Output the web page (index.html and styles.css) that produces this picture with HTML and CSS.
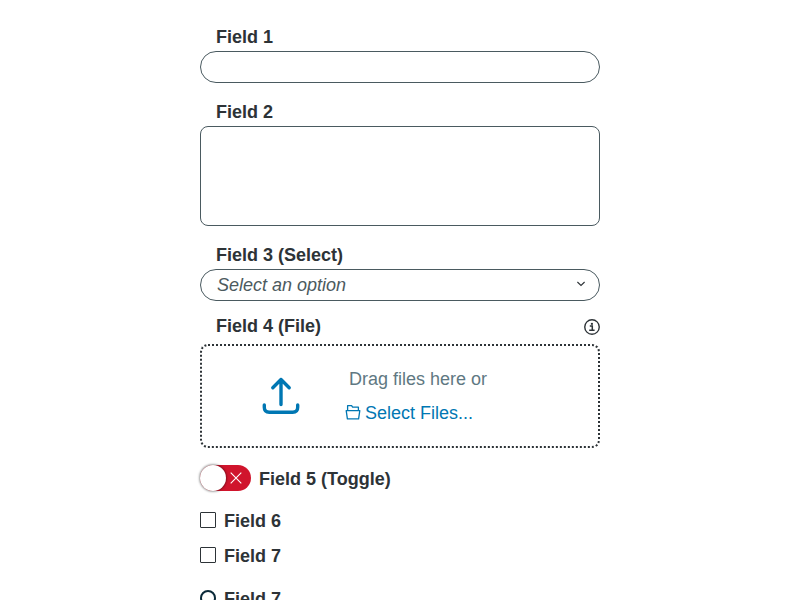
FILE: index.html
```
<!DOCTYPE html>
<html lang="en">
<head>
<meta charset="utf-8">
<title>Form</title>
<link rel="stylesheet" href="styles.css">
</head>
<body>
<form class="form">
  <div class="field">
    <label class="label" for="f1">Field 1</label>
    <input class="input" id="f1" type="text">
  </div>
  <div class="field field-area">
    <label class="label" for="f2">Field 2</label>
    <textarea class="textarea" id="f2"></textarea>
  </div>
  <div class="field field-select">
    <span class="label">Field 3 (Select)</span>
    <div class="select">
      <span>Select an option</span>
      <svg class="chevron" width="10" height="6" viewBox="0 0 10 6"><path d="M1.400 1 5 4.500 8.600 1" fill="none" stroke="#2d3337" stroke-width="1.100"/></svg>
    </div>
  </div>
  <div class="field-file">
    <div class="file-head">
      <span class="label">Field 4 (File)</span>
      <svg class="info" width="16" height="16" viewBox="0 0 16 16"><circle cx="8" cy="8" r="7.25" fill="none" stroke="#2d3337" stroke-width="1.4"/><path d="M5.8 7h2.500v4M5.200 11.200h5.400" fill="none" stroke="#2d3337" stroke-width="1.500"/><rect x="6.900" y="3.900" width="2" height="1.900" fill="#2d3337"/></svg>
    </div>
    <div class="drop">
      <svg class="upload" width="38" height="38" viewBox="0 0 38 38" fill="none" stroke="#0077b3" stroke-width="3.4" stroke-linecap="round" stroke-linejoin="round"><path d="M19 27.500V2.500M10.800 10.800 19 2.500l8.200 8.300M2.300 28v2.200q0 5 5 5h23.400q5 0 5-5V28"/></svg>
      <div class="drop-text">
        <span class="hint">Drag files here or</span>
        <span class="pick">
          <svg class="folder" width="16" height="16" viewBox="0 0 16 16" fill="none" stroke="#0077b3" stroke-width="1.3" stroke-linejoin="round"><path d="M1.200 6.600h13.600l-1.200 8.200H2.400zM2.600 6.400V1.700h4l1 1.500h5.800v3.200"/></svg>Select Files...</span>
      </div>
    </div>
  </div>
  <div class="row row-toggle">
    <span class="toggle"><span class="knob"></span><svg width="12" height="12" viewBox="0 0 12 12"><path d="M.7 .7l10.600 10.600M11.300 .7.7 11.300" fill="none" stroke="#fff" stroke-width="1.1"/></svg></span>
    <span>Field 5 (Toggle)</span>
  </div>
  <div class="row"><span class="check"></span><span>Field 6</span></div>
  <div class="row row-second"><span class="check"></span><span>Field 7</span></div>
  <div class="row row-radio"><span class="radio"></span><span>Field 7</span></div>
</form>
</body>
</html>
```
FILE: styles.css
```
* { box-sizing: border-box; }
html { overflow: hidden; }
body {
  margin: 0;
  height: 600px;
  overflow: hidden;
  background: #fff;
  color: #2d3337;
  font: bold 18px/20px "Liberation Sans", Arial, sans-serif;
}
svg { display: block; flex: none; }
.form { width: 400px; margin: 0 auto; padding-top: 27px; }
.field { display: flex; flex-direction: column; gap: 4px; }
.field-area, .field-select { margin-top: 19px; }
.label { padding-left: 16px; }
.input, .textarea, .select {
  width: 100%;
  margin: 0;
  border: 1px solid #4a5a60;
  background: #fff;
  outline: 0;
}
.input, .select { height: 32px; border-radius: 16px; padding: 0 16px; }
.textarea { display: block; height: 100px; border-radius: 8px; resize: none; }
.select {
  display: flex;
  align-items: center;
  justify-content: space-between;
  padding-right: 13px;
  font-weight: normal;
  font-style: italic;
  color: #4c5a5e;
}
.chevron { margin-bottom: 2px; }
.field-file { margin-top: 15px; }
.file-head { display: flex; justify-content: space-between; align-items: center; height: 22px; padding-bottom: 2px; }
.info { margin-top: 2px; }
.drop {
  display: flex;
  height: 104px;
  margin-top: 6px;
  border: 2px dotted #2d3337;
  border-radius: 8px;
  font-weight: normal;
}
.upload { margin: 31px 0 0 60px; }
.drop-text { display: flex; flex-direction: column; gap: 14px; padding: 23px 0 0 45px; }
.hint { padding-left: 4px; color: #607882; }
.pick { display: flex; align-items: center; gap: 4px; color: #0077b3; }
.folder { margin-bottom: 2px; }
.row { display: flex; align-items: center; gap: 8px; height: 20px; }
.row-toggle { height: 26px; margin: 17px 0 20px; }
.row-toggle > span:last-child { padding-top: 2px; }
.toggle {
  display: flex;
  align-items: center;
  gap: 4px;
  width: 51px;
  height: 26px;
  border-radius: 13px;
  background: #d0142c;
}
.knob {
  width: 26px;
  height: 26px;
  border-radius: 50%;
  background: #fff;
  box-shadow: 0 0 2px 1px rgba(0, 0, 0, .35);
}
.check { width: 16px; height: 16px; margin-bottom: 2px; border: 1px solid #2d3337; border-radius: 1px; }
.row-second { margin-top: 15px; }
.row-radio { margin-top: 23px; }
.radio { width: 16px; height: 16px; margin-bottom: 2px; border: 2px solid #0b2a3a; border-radius: 50%; }
```
